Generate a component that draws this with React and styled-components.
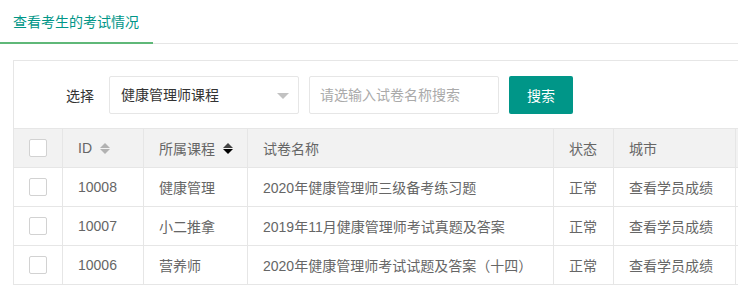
import styled, { createGlobalStyle } from "styled-components";

const GlobalStyle = createGlobalStyle`
    * {
        box-sizing: border-box;
    }
    body {
        margin: 0;
        background: #ffffff;
        overflow: hidden;
        font-family: "Liberation Sans", "Noto Sans CJK SC", Helvetica, sans-serif;
        font-size: 14px;
        color: #666666;
    }
`;

const columns = "49px 81px 104px 306px 60px 122px 200px";

const rows = [
    { id: "10008", course: "健康管理", name: "2020年健康管理师三级备考练习题", status: "正常", city: "查看学员成绩" },
    { id: "10007", course: "小二推拿", name: "2019年11月健康管理师考试真题及答案", status: "正常", city: "查看学员成绩" },
    { id: "10006", course: "营养师", name: "2020年健康管理师考试试题及答案（十四）", status: "正常", city: "查看学员成绩" },
];

function SortIcon({ active }) {
    return (
        <Sort>
            <Edge $up $color={active === "asc" ? "#000000" : active ? "#444444" : "#b2b2b2"} />
            <Edge $color={active === "desc" ? "#000000" : "#b2b2b2"} />
        </Sort>
    );
}

export default function App() {
    return (
        <Page>
            <GlobalStyle />
            <TabBar>
                <Tab>查看考生的考试情况</Tab>
            </TabBar>
            <Panel>
                <FormRow>
                    <Label>选择</Label>
                    <Select>
                        <span>健康管理师课程</span>
                        <Arrow />
                    </Select>
                    <Input placeholder="请选输入试卷名称搜索" />
                    <Button>搜索</Button>
                </FormRow>
                <Table>
                    <HeadRow>
                        <Cell $center>
                            <Checkbox />
                        </Cell>
                        <Cell>
                            ID
                            <SortIcon />
                        </Cell>
                        <Cell>
                            所属课程
                            <SortIcon active="desc" />
                        </Cell>
                        <Cell>试卷名称</Cell>
                        <Cell>状态</Cell>
                        <Cell>城市</Cell>
                        <Cell></Cell>
                    </HeadRow>
                    {rows.map((r) => (
                        <Row key={r.id}>
                            <Cell $center>
                                <Checkbox />
                            </Cell>
                            <Cell>{r.id}</Cell>
                            <Cell>{r.course}</Cell>
                            <Cell>{r.name}</Cell>
                            <Cell>{r.status}</Cell>
                            <Cell>{r.city}</Cell>
                            <Cell></Cell>
                        </Row>
                    ))}
                </Table>
            </Panel>
        </Page>
    );
}

const Page = styled.div`
    width: 738px;
    height: 286px;
    overflow: hidden;
`;

const TabBar = styled.ul`
    margin: 0;
    padding: 0;
    list-style: none;
    height: 44px;
    border-bottom: 1px solid #e6e6e6;
    display: flex;
`;

const Tab = styled.li`
    height: 44px;
    padding: 0 14px 0 13px;
    line-height: 43px;
    font-size: 14px;
    color: #009688;
    border-bottom: 2px solid #5fb878;
    margin-bottom: -1px;
    font-family: "Noto Sans CJK SC", sans-serif;
`;

const Panel = styled.div`
    margin: 16px 0 0 13px;
    width: 1000px;
    border: 1px solid #e6e6e6;
    border-bottom: none;
    padding-top: 15px;
`;

const FormRow = styled.div`
    display: flex;
    align-items: center;
    height: 38px;
    margin-bottom: 14px;
`;

const Label = styled.label`
    width: 80px;
    margin-left: 15px;
    padding-right: 15px;
    text-align: right;
    color: #333333;
    font-size: 14px;
`;

const Select = styled.div`
    position: relative;
    width: 190px;
    height: 38px;
    border: 1px solid #e6e6e6;
    border-radius: 2px;
    padding-left: 11px;
    line-height: 36px;
    color: #333333;
    margin-right: 10px;
`;

const Arrow = styled.i`
    position: absolute;
    right: 9px;
    top: 16px;
    width: 0;
    height: 0;
    border-style: solid;
    border-width: 6px 6px 0 6px;
    border-color: #c2c2c2 transparent transparent transparent;
`;

const Input = styled.input`
    width: 190px;
    height: 38px;
    border: 1px solid #e6e6e6;
    border-radius: 2px;
    padding: 0 10px;
    font-family: inherit;
    font-size: 14px;
    outline: none;
    margin-right: 10px;
    &::placeholder {
        color: #aaaaaa;
    }
`;

const Button = styled.button`
    height: 38px;
    width: 64px;
    border: none;
    border-radius: 2px;
    background: #009688;
    color: #ffffff;
    font-family: inherit;
    font-size: 14px;
    padding: 0;
`;

const Table = styled.div`
    border-top: 1px solid #e6e6e6;
`;

const Row = styled.div`
    display: grid;
    grid-template-columns: ${columns};
    height: 39px;
    border-bottom: 1px solid #e6e6e6;
    background: #ffffff;
`;

const HeadRow = styled(Row)`
    background: #f2f2f2;
`;

const Cell = styled.div`
    display: flex;
    align-items: center;
    justify-content: ${(p) => (p.$center ? "center" : "flex-start")};
    padding: ${(p) => (p.$center ? "0" : "0 15px")};
    border-right: 1px solid #e6e6e6;
    white-space: nowrap;
    overflow: hidden;
    color: #666666;
    font-size: 14px;
`;

const Checkbox = styled.span`
    display: block;
    width: 18px;
    height: 18px;
    border: 1px solid #d2d2d2;
    border-radius: 2px;
    background: #ffffff;
`;

const Sort = styled.span`
    display: inline-flex;
    flex-direction: column;
    gap: 1px;
    margin-left: 8px;
`;

const Edge = styled.i`
    width: 0;
    height: 0;
    border-style: solid;
    border-width: ${(p) => (p.$up ? "0 5px 5px 5px" : "5px 5px 0 5px")};
    border-color: ${(p) =>
        p.$up
            ? `transparent transparent ${p.$color} transparent`
            : `${p.$color} transparent transparent transparent`};
`;
